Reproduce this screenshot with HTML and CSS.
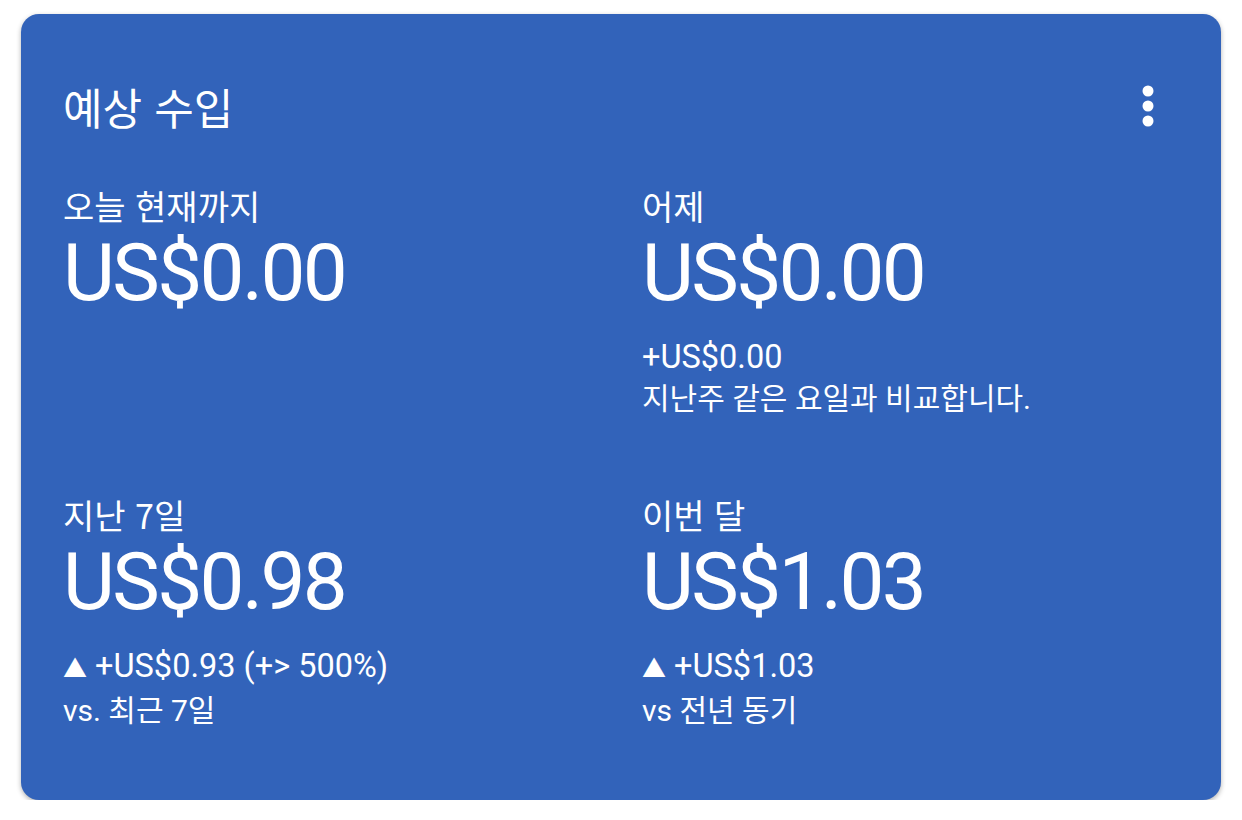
FILE: index.html
```html
<!DOCTYPE html>
<html lang="ko">
<head>
  <meta charset="UTF-8" />
  <meta name="viewport" content="width=device-width, initial-scale=1" />
  <title>예상 수입</title>
  <link rel="stylesheet" href="styles.css">
</head>
<body>
  <div class="card">
    <div class="card-head">
      <h1 class="title">예상 수입</h1>
      <div class="more">
        <svg width="12" height="42" viewBox="0 0 12 42">
          <circle cx="6" cy="6" r="5.5" fill="#fff"/>
          <circle cx="6" cy="21" r="5.5" fill="#fff"/>
          <circle cx="6" cy="36" r="5.5" fill="#fff"/>
        </svg>
      </div>
    </div>

    <div class="stats">
      <div class="stat">
        <div class="label">오늘 현재까지</div>
        <div class="value">US$0.00</div>
      </div>
      <div class="stat">
        <div class="label">어제</div>
        <div class="value">US$0.00</div>
        <div class="note amount">+US$0.00</div>
        <div class="note">지난주 같은 요일과 비교합니다.</div>
      </div>
      <div class="stat">
        <div class="label">지난 7일</div>
        <div class="value">US$0.98</div>
        <div class="note amount"><span class="up">▲</span> +US$0.93 (+&gt; 500%)</div>
        <div class="note">vs. 최근 7일</div>
      </div>
      <div class="stat">
        <div class="label">이번 달</div>
        <div class="value">US$1.03</div>
        <div class="note amount"><span class="up">▲</span> +US$1.03</div>
        <div class="note">vs 전년 동기</div>
      </div>
    </div>
  </div>
</body>
</html>
```

FILE: styles.css
```css
body {
  margin: 0;
  background: #fff;
  font-family: Roboto, "Noto Sans CJK KR", sans-serif;
  color: #fff;
}
.card {
  width: 1200px;
  height: 786px;
  box-sizing: border-box;
  margin: 14px 0 0 21px;
  padding: 68px 42px 0 42px;
  background: #3263ba;
  border-radius: 18px;
  box-shadow: 0 2px 5px rgba(0,0,0,0.3);
}
.card-head {
  display: flex;
  justify-content: space-between;
  align-items: center;
  height: 48px;
}
.title {
  margin: 0;
  font-family: "Noto Sans CJK KR", sans-serif;
  font-size: 43px;
  font-weight: 400;
  line-height: 48px;
}
.more {
  margin-right: 25px;
  display: flex;
}
.stats {
  display: grid;
  grid-template-columns: 579px 1fr;
  row-gap: 74px;
  margin-top: 55px;
}
.label {
  font-family: "Noto Sans CJK KR", sans-serif;
  font-size: 34px;
  line-height: 42px;
}
.value {
  font-family: Roboto, sans-serif;
  font-size: 80px;
  line-height: 92px;
  letter-spacing: -2.6px;
  margin-bottom: 17px;
}
.note {
  font-size: 30px;
  line-height: 42px;
}
.note.amount {
  font-size: 32.5px;
}
.up {
  font-size: 24px;
}
```
